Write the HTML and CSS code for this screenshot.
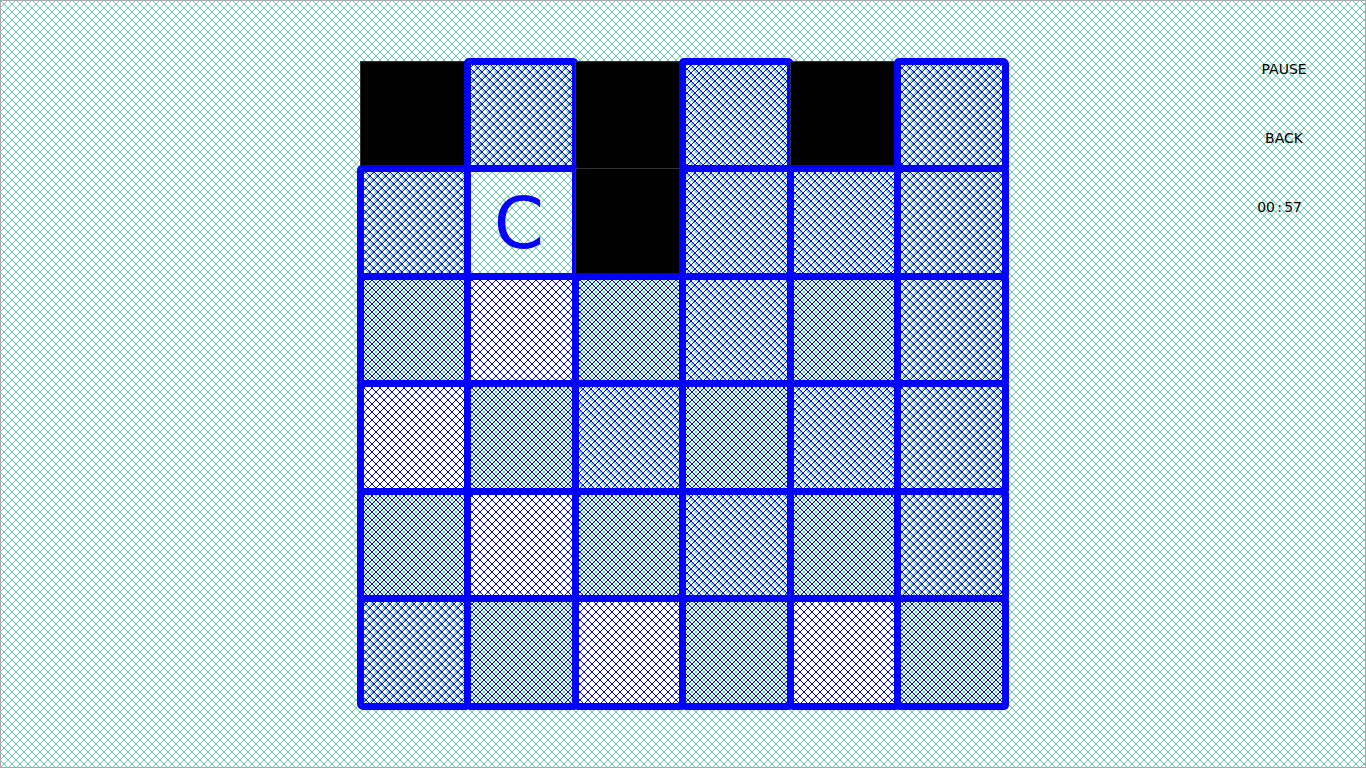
FILE: index.html
```html
<!DOCTYPE html>
<html lang="en">
<head>
    <meta charset="UTF-8">
    <meta name="viewport" content="width=device-width, initial-scale=1.0">
    <title>Memory Game</title>
    <link rel="stylesheet" href="styles.css">
</head>
<body>
    <div class="board">
        <div class="cell cell-black"></div>
        <div class="cell cell-mid"></div>
        <div class="cell cell-black"></div>
        <div class="cell cell-light"></div>
        <div class="cell cell-black"></div>
        <div class="cell cell-mid"></div>

        <div class="cell cell-mid"></div>
        <div class="cell cell-open">C</div>
        <div class="cell cell-black"></div>
        <div class="cell cell-light"></div>
        <div class="cell cell-light"></div>
        <div class="cell cell-mid"></div>

        <div class="cell"></div>
        <div class="cell cell-sparse"></div>
        <div class="cell"></div>
        <div class="cell cell-light"></div>
        <div class="cell"></div>
        <div class="cell cell-mid"></div>

        <div class="cell cell-sparse"></div>
        <div class="cell"></div>
        <div class="cell cell-light"></div>
        <div class="cell"></div>
        <div class="cell cell-light"></div>
        <div class="cell cell-mid"></div>

        <div class="cell"></div>
        <div class="cell cell-sparse"></div>
        <div class="cell"></div>
        <div class="cell cell-light"></div>
        <div class="cell"></div>
        <div class="cell cell-mid"></div>

        <div class="cell cell-mid"></div>
        <div class="cell"></div>
        <div class="cell cell-sparse"></div>
        <div class="cell"></div>
        <div class="cell cell-sparse"></div>
        <div class="cell"></div>
    </div>
    <div class="side">
        <div class="side-item">PAUSE</div>
        <div class="side-item">BACK</div>
        <div class="side-item timer">00 : 57</div>
    </div>
</body>
</html>
```

FILE: styles.css
```css
html, body {
    height: 100%;
}
body {
    box-sizing: border-box;
    margin: 0;
    border: 1px solid #aaaaaa;
    background-color: #ffffff;
    background-image:
        linear-gradient(45deg, transparent 44%, #5fcfb0 44%, #5fcfb0 56%, transparent 56%),
        linear-gradient(135deg, transparent 44%, #5fcfb0 44%, #5fcfb0 56%, transparent 56%);
    background-size: 8px 8px;
    color: #000000;
    font-family: "DejaVu Sans", sans-serif;
    font-size: 14px;
    display: flex;
    justify-content: center;
    align-items: center;
    overflow: hidden;
}
.board {
    display: grid;
    grid-template-columns: 107px 108px 107px 108px 107px 108px;
    grid-template-rows: 107px 108px 107px 108px 107px 108px;
    margin: 0 1px 1px 0;
}
.cell {
    box-sizing: border-box;
    border: solid #0000ff;
    border-width: 4px 3px 3px 4px;
    border-radius: 2px;
    box-shadow: 0 0 0 3px #0000ff, 1px 1px 0 3px #0000ff;
    background-image:
        linear-gradient(45deg, transparent 44%, #0000ff 44%, #0000ff 56%, transparent 56%),
        linear-gradient(135deg, transparent 44%, #0000ff 44%, #0000ff 56%, transparent 56%);
    background-size: 8px 8px;
    background-attachment: fixed;
    background-position: 4px 0;
}
.cell-sparse {
    background-position: 0 0;
}
.cell-light {
    background-position: 3px 1px;
}
.cell-mid {
    background-position: 2px 0;
}
.cell-black {
    border: solid #333333;
    border-width: 1px 0 0 1px;
    border-radius: 0;
    box-shadow: none;
    background: #000000;
}
.cell-open {
    background-image: none;
    color: #0000ff;
    font-size: 72px;
    padding-right: 5px;
    display: flex;
    justify-content: center;
    align-items: center;
}
.side {
    position: absolute;
    top: 35px;
    right: 55px;
    display: flex;
    flex-direction: column;
    align-items: center;
}
.side-item {
    line-height: 69px;
}
.timer {
    margin-right: 9px;
    word-spacing: -2.2px;
}
```
